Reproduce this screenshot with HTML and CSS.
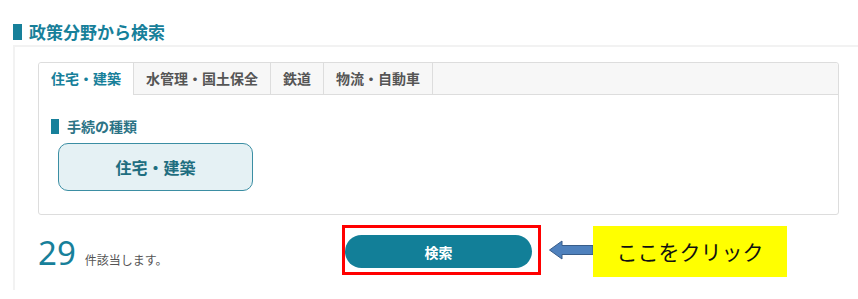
FILE: index.html
```html
<!DOCTYPE html>
<html lang="ja">
<head>
    <meta charset="UTF-8">
    <meta name="viewport" content="width=device-width, initial-scale=1.0">
    <title>政策分野から検索</title>
    <link rel="stylesheet" href="styles.css">
</head>
<body>
    <div class="page">
        <h2 class="ttl">政策分野から検索</h2>
        <div class="panel">
            <div class="tabbox">
                <ul class="tabs">
                    <li class="tab active">住宅・建築</li>
                    <li class="tab">水管理・国土保全</li>
                    <li class="tab">鉄道</li>
                    <li class="tab">物流・自動車</li>
                </ul>
                <div class="tabbody">
                    <h3 class="subttl">手続の種類</h3>
                    <button class="kind">住宅・建築</button>
                </div>
            </div>

            <div class="result">
                <p class="count"><span class="num">29</span><span class="unit">件該当します。</span></p>
                <div class="hilite"><button class="search">検索</button></div>
                <svg class="arrow" width="44" height="20" viewBox="0 0 44 20">
                    <polygon points="0.5,10 13,1 13,5.5 44,5.5 44,14.5 13,14.5 13,19" fill="#4f81bd" stroke="#385d8a" stroke-width="1"/>
                </svg>
                <div class="callout">ここをクリック</div>
            </div>
        </div>
    </div>
</body>
</html>
```

FILE: styles.css
```css
body { margin: 0; font-family: "Noto Sans CJK JP", "Noto Sans", sans-serif; color: #333; background: #fff; }
.page { width: 858px; padding-top: 20px; }

.ttl { margin: 0 0 1px 13px; font-size: 17px; line-height: 24px; font-weight: bold; color: #17809a; display: flex; align-items: center; }
.ttl::before { content: ""; flex-shrink: 0; width: 9px; height: 16px; background: #17809a; margin-right: 7px; }

.panel { margin-left: 13px; border-top: 2px solid #f2f2f2; border-left: 2px solid #f2f2f2; padding: 15px 19px 13px 23px; }

.tabbox { border: 1px solid #ddd; border-radius: 3px; }
.tabs { list-style: none; margin: 0; padding: 0; display: flex; background: #f7f7f7; border-bottom: 1px solid #ddd; border-radius: 3px 3px 0 0; height: 31px; }
.tab { padding: 0 12px; border-right: 1px solid #ddd; font-size: 14px; font-weight: bold; line-height: 31px; color: #555; }
.tab.active { background: #fff; color: #17809a; height: 32px; border-radius: 3px 0 0 0; }

.tabbody { padding: 21px 12px 23px; }
.subttl { margin: 0; font-size: 14px; line-height: 20px; font-weight: bold; color: #2c7385; display: flex; align-items: center; }
.subttl::before { content: ""; flex-shrink: 0; width: 8px; height: 15px; background: #17809a; margin-right: 8px; }
.kind { display: block; margin: 7px 0 0 7px; width: 195px; height: 48px; border: 1px solid #3b8ea3; border-radius: 10px; background: #e5f1f4; color: #1f6e80; font-family: inherit; font-size: 16px; font-weight: bold; }

.result { display: flex; align-items: center; margin-top: 10px; height: 52px; }
.count { margin: 0; width: 304px; display: flex; align-items: baseline; padding-top: 4px; }
.num { font-family: "Noto Sans", sans-serif; font-size: 33px; line-height: 40px; color: #17809a; }
.unit { margin-left: 9px; font-size: 12px; color: #555; }

.hilite { border: 3px solid #f00; padding: 7px 6px 4px 0; margin-top: -2px; }
.search { display: block; width: 187px; height: 33px; border: none; border-radius: 17px; background: #127f98; color: #fff; font-family: inherit; font-size: 14px; font-weight: bold; }

.arrow { margin: -3px 0 0 8px; display: block; }
.callout { width: 194px; height: 51px; background: #ffff00; color: #111; font-size: 21px; display: flex; align-items: center; justify-content: center; }
```
